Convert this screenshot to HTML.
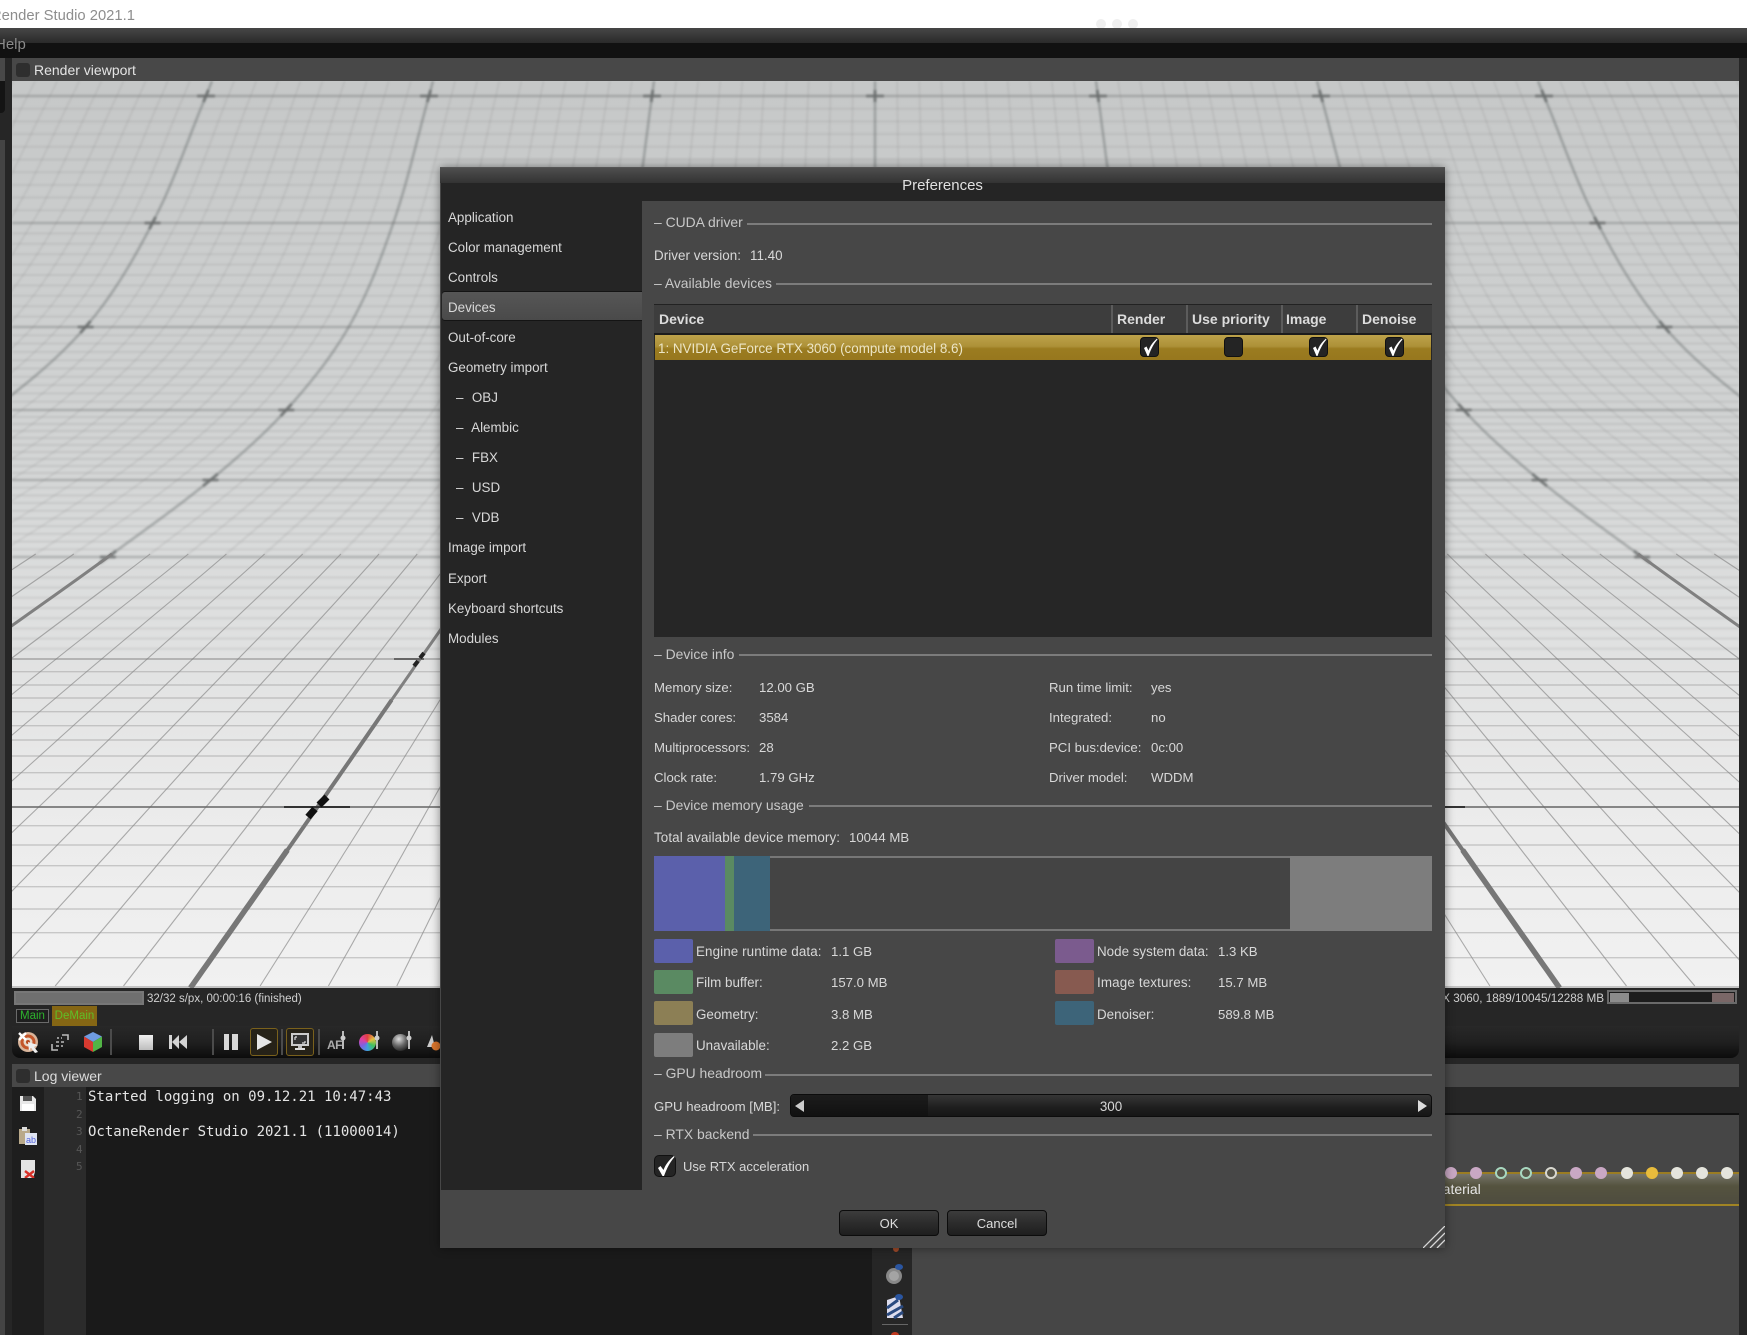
<!DOCTYPE html>
<html lang="en"><head><meta charset="utf-8"><title>OctaneRender Studio 2021.1</title>
<style>
html,body{margin:0;padding:0;background:#262626}
#p{position:relative;width:1747px;height:1335px;overflow:hidden;background:#262626;font-family:"Liberation Sans",sans-serif;font-size:13.4px;color:#d8d8d8}
#p div,#p svg,#p span{position:absolute}
#d .t,#d .li{margin-top:1px}
#d .s{font-size:13.9px;color:#c8c8c8;margin-top:0}
#d .h{font-size:14px;font-weight:bold;color:#dcdcdc;margin-top:0}
#d .v{font-size:13.2px}
.t{white-space:nowrap;line-height:16px;height:16px}
.ln{height:2px;background:#7c7c7c}
.sw{width:39px;height:24px;border-radius:2px}
.cb{width:19px;height:20px;background:#242424;border:1px solid #111;border-radius:4px;box-sizing:border-box}
.btn{height:26px;width:100px;box-sizing:border-box;border:1px solid #0c0c0c;border-radius:4px;background:linear-gradient(#3c3c3c,#2c2c2c 50%,#1e1e1e);text-align:center;line-height:25px;color:#ddd;font-size:13px}
.li{left:448px;white-space:nowrap;line-height:16px}
.sub{left:456px;word-spacing:.5px}
.pin{width:12px;height:12px;border-radius:50%;top:1167px}
.ring{width:12px;height:12px;border-radius:50%;top:1167px;box-sizing:border-box;background:#59574a}
.sep{width:2px;background:#4b4b4b;top:1029px;height:26px}
</style></head><body><div id="p">

<!-- window title -->
<div style="left:0;top:0;width:1747px;height:28px;background:#fff"></div>
<div class="t" style="left:-9px;top:8px;font-size:14.8px;color:#8d8d8d">Render Studio 2021.1</div>
<div style="left:1096px;top:19px;width:10px;height:10px;border-radius:50%;background:#efefef"></div>
<div style="left:1112px;top:19px;width:10px;height:10px;border-radius:50%;background:#efefef"></div>
<div style="left:1128px;top:19px;width:10px;height:10px;border-radius:50%;background:#efefef"></div>

<!-- menu -->
<div style="left:0;top:28px;width:1747px;height:15px;background:linear-gradient(#464646,#2a2a2a)"></div>
<div style="left:0;top:43px;width:1747px;height:15px;background:#111"></div>
<div class="t" style="left:-5px;top:37px;font-size:15px;color:#8a8a8a">Help</div>

<!-- left strip -->
<div style="left:0;top:58px;width:5px;height:23px;background:#484848"></div>
<div style="left:0;top:81px;width:5px;height:32px;background:#141414;border-radius:0 0 4px 0"></div>
<div style="left:0;top:140px;width:5px;height:1195px;background:#444"></div>

<!-- viewport header -->
<div style="left:12px;top:58px;width:1727px;height:23px;background:#484848"></div>
<div style="left:16px;top:63px;width:14px;height:14px;border-radius:3px;background:#2e2e2e"></div>
<div class="t" style="left:34px;top:62px;font-size:14px;color:#e4e4e4">Render viewport</div>

<!-- viewport -->
<svg id="vp" style="left:12px;top:81px" width="1727" height="907" viewBox="12 81 1727 907">
<defs>
<linearGradient id="bg" x1="0" y1="0" x2="0" y2="1"><stop offset="0" stop-color="#c6c8c8"/><stop offset=".4" stop-color="#d2d4d4"/><stop offset=".62" stop-color="#e0e1e1"/><stop offset=".8" stop-color="#ebebeb"/><stop offset="1" stop-color="#f1f1f1"/></linearGradient>
<filter id="b1" x="-5%" y="-5%" width="110%" height="110%"><feGaussianBlur stdDeviation="1.1"/></filter>
<filter id="b2" x="-5%" y="-5%" width="110%" height="110%"><feGaussianBlur stdDeviation=".35"/></filter>
</defs>
<rect x="12" y="81" width="1727" height="907" fill="url(#bg)"/>
<g id="gt" filter="url(#b1)" fill="none"></g>
<g id="gb" filter="url(#b2)" fill="none"></g>
<g fill="none" stroke="#151515" stroke-linecap="butt">
<path d="M284 807H350" stroke-width="2" stroke="#333"/>
<path d="M394 659H424" stroke-width="2" stroke="#666"/>
<path d="M1432 807H1465" stroke-width="2" stroke="#333"/>
<path d="M327 797L319 805M315 809L308 817" stroke-width="7" stroke="#111"/>
<path d="M424 653L420 658M418 661L414 666" stroke-width="4" stroke="#222"/>
</g>
</svg>

<!-- status -->
<div style="left:14px;top:991px;width:130px;height:14px;box-sizing:border-box;border:2px solid #777;background:#6f6f6f"></div>
<div class="t" style="left:147px;top:990px;font-size:11.5px;color:#d0d0d0;margin-top:1px">32/32 s/px, 00:00:16 (finished)</div>
<div class="t" style="right:143px;top:990px;font-size:11.7px;color:#d0d0d0;margin-top:1px">RTX 3060, 1889/10045/12288 MB</div>
<div style="left:1607px;top:990px;width:130px;height:14px;box-sizing:border-box;border:2px solid #6a6a6a;background:#1c1c1c"></div>
<div style="left:1610px;top:993px;width:19px;height:9px;background:#8c8c8c"></div>
<div style="left:1712px;top:993px;width:22px;height:9px;background:#7a6767"></div>
<div style="left:16px;top:1009px;width:33px;height:14px;box-sizing:border-box;border:1px solid #6a6a6a;background:#1e1e1e;color:#2db32d;font-size:11.5px;line-height:12px;text-align:center">Main</div>
<div style="left:52px;top:1006px;width:45px;height:20px;background:#856614;color:#5fbf28;font-size:11.5px;line-height:20px;text-align:center">DeMain</div>

<!-- toolbar -->
<div style="left:12px;top:1026px;width:1727px;height:32px;background:linear-gradient(#282828,#202020 50%,#0c0c0c);border-radius:0 0 8px 8px"></div>
<svg style="left:16px;top:1030px" width="24" height="24" viewBox="0 0 24 24"><circle cx="12" cy="12" r="10" fill="#d8b49a"/><circle cx="12" cy="12" r="7.5" fill="#c4562a"/><circle cx="12" cy="12" r="4.5" fill="#e8d8c8"/><circle cx="12" cy="12" r="2" fill="#b84a20"/><path d="M3 3L10 10M10 3L3 10" stroke="#fff" stroke-width="2.4"/><path d="M12 12L22 15L18 17L22 22L19 23L15 18L13 21Z" fill="#eee"/></svg>
<svg style="left:50px;top:1032px" width="20" height="20" viewBox="0 0 20 20" fill="none" stroke="#bbb" stroke-width="1.6"><path d="M12 3H18V8M8 18H2V12"/><path d="M7 6h2M12 6h-1M6 10h3M11 10h3M6 14h3M11 14h2"/></svg>
<svg style="left:83px;top:1031px" width="20" height="22" viewBox="0 0 20 22"><path d="M10 1L19 5.500L10 11L1 5.500Z" fill="#6f9be0"/><path d="M1 5.500L10 11V21L1 16Z" fill="#d83a30"/><path d="M19 5.500L10 11V21L19 16Z" fill="#52b446"/></svg>
<div class="sep" style="left:110px"></div>
<div style="left:139px;top:1035px;width:14px;height:15px;background:linear-gradient(#f0f0f0,#bdbdbd)"></div>
<svg style="left:168px;top:1034px" width="20" height="16" viewBox="0 0 20 16" fill="#d4d4d4"><rect x="1" y="1" width="3" height="14"/><path d="M11 1V15L4 8Z"/><path d="M19 1V15L11 8Z"/></svg>
<div class="sep" style="left:212px"></div>
<div style="left:224px;top:1034px;width:5px;height:16px;background:#d8d8d8"></div>
<div style="left:232px;top:1034px;width:6px;height:16px;background:#d8d8d8"></div>
<div style="left:250px;top:1028px;width:28px;height:28px;box-sizing:border-box;border:1.500px solid #7a611c;border-radius:3px;background:#262218"></div>
<svg style="left:256px;top:1033px" width="17" height="18" viewBox="0 0 17 18"><path d="M1 1L16 9L1 17Z" fill="#e6e6e6"/></svg>
<div class="sep" style="left:281px"></div>
<div style="left:286px;top:1028px;width:28px;height:28px;box-sizing:border-box;border:1.500px solid #7a611c;border-radius:3px;background:#262218"></div>
<svg style="left:290px;top:1032px" width="20" height="20" viewBox="0 0 20 20"><rect x="1" y="1" width="18" height="13" fill="#ccc"/><rect x="3" y="3" width="14" height="9" fill="#333"/><path d="M5 5V8M5 5L7 5M15 11H12M15 11V9" stroke="#ddd" stroke-width="1.200" fill="none"/><rect x="8" y="14" width="4" height="2" fill="#bbb"/><rect x="5" y="16" width="10" height="2" fill="#ddd"/></svg>
<div class="sep" style="left:318px"></div>
<div class="t" style="left:327px;top:1037px;font-size:12px;font-weight:bold;color:#aaa;letter-spacing:-.5px">AF</div>
<svg style="left:340px;top:1031px" width="6" height="18" viewBox="0 0 6 18"><path d="M3 0V18" stroke="#bbb" stroke-width="2"/><circle cx="3" cy="7" r="2.500" fill="#ccc"/></svg>
<div style="left:359px;top:1034px;width:17px;height:17px;border-radius:50%;background:conic-gradient(#e04040,#e0c040,#40c060,#40a0e0,#8060e0,#e040a0,#e04040)"></div>
<svg style="left:374px;top:1031px" width="6" height="18" viewBox="0 0 6 18"><path d="M3 0V18" stroke="#bbb" stroke-width="2"/><circle cx="3" cy="7" r="2.500" fill="#ccc"/></svg>
<div style="left:392px;top:1034px;width:17px;height:17px;border-radius:50%;background:radial-gradient(circle at 40% 30%,#ddd,#666 45%,#222 80%)"></div>
<svg style="left:406px;top:1031px" width="6" height="18" viewBox="0 0 6 18"><path d="M3 0V18" stroke="#bbb" stroke-width="2"/><circle cx="3" cy="7" r="2.500" fill="#ccc"/></svg>
<svg style="left:426px;top:1034px" width="16" height="17" viewBox="0 0 16 17"><path d="M6 1L1 13H9Z" fill="#ccc"/><circle cx="10" cy="12" r="4.500" fill="#d8742c"/></svg>

<!-- log viewer -->
<div style="left:12px;top:1064px;width:1727px;height:23px;background:#484848"></div>
<div style="left:16px;top:1069px;width:14px;height:14px;border-radius:3px;background:#2e2e2e"></div>
<div class="t" style="left:34px;top:1068px;font-size:14px;color:#dcdcdc">Log viewer</div>
<div style="left:12px;top:1087px;width:860px;height:248px;background:#1a1a1a"></div>
<div style="left:12px;top:1087px;width:32px;height:248px;background:#1e1e1e"></div>
<div style="left:44px;top:1087px;width:42px;height:248px;background:#2b2b2b"></div>
<div style="left:872px;top:1087px;width:40px;height:248px;background:#262626"></div>
<svg style="left:20px;top:1095px" width="16" height="16" viewBox="0 0 16 16"><path d="M0 1H13L16 4V16H0Z" fill="#e8e8e8"/><rect x="3" y="1" width="9" height="5" fill="#555"/><rect x="2" y="9" width="12" height="7" fill="#fff"/></svg>
<svg style="left:18px;top:1127px" width="20" height="19" viewBox="0 0 20 19"><rect x="1" y="2" width="11" height="15" fill="#b9a98a"/><rect x="4" y="0" width="5" height="4" fill="#ddd"/><rect x="7" y="6" width="12" height="12" fill="#dfe4f2"/><text x="8" y="16" font-size="9" fill="#5566dd" font-family="Liberation Sans">ab</text></svg>
<svg style="left:20px;top:1160px" width="17" height="18" viewBox="0 0 17 18"><path d="M1 0H15V12L13 18H1Z" fill="#e4e4e4"/><path d="M5 11L14 18M14 11L5 18" stroke="#d83028" stroke-width="2.400"/></svg>
<div style="left:76px;top:1087px;color:#565656;font-family:'DejaVu Sans Mono',monospace;font-size:11px;line-height:17.500px;padding-top:1px">1<br>2<br>3<br>4<br>5</div>
<div class="t" style="left:88px;top:1089px;font-family:'DejaVu Sans Mono',monospace;font-size:14px;color:#e4e4e4">Started logging on 09.12.21 10:47:43</div>
<div class="t" style="left:88px;top:1124px;font-family:'DejaVu Sans Mono',monospace;font-size:14px;color:#e4e4e4">OctaneRender Studio 2021.1 (11000014)</div>

<!-- node graph -->
<div style="left:912px;top:1087px;width:827px;height:26px;background:#262626"></div>
<div style="left:912px;top:1113px;width:827px;height:2px;background:#111"></div>
<div style="left:912px;top:1115px;width:827px;height:220px;background:#464646"></div>
<div style="left:1000px;top:1172px;width:739px;height:34px;background:linear-gradient(#757469,#55533f 40%,#4e4c3f);box-sizing:border-box;border-top:2px solid #9a7c22;border-bottom:2px solid #a08424"></div>
<div class="t" style="left:1431px;top:1181px;font-size:14px;color:#e8e8e8">Material</div>
<div class="pin" style="left:1445px;background:#c9a8c4"></div>
<div class="pin" style="left:1470px;background:#c9a8c4"></div>
<div class="ring" style="left:1495px;border:2px solid #a8d8c0"></div>
<div class="ring" style="left:1520px;border:2px solid #a8d8c0"></div>
<div class="ring" style="left:1545px;border:2px solid #d8d8d0"></div>
<div class="pin" style="left:1570px;background:#c9a8c4"></div>
<div class="pin" style="left:1595px;background:#c9a8c4"></div>
<div class="pin" style="left:1621px;background:#e4e4dc"></div>
<div class="pin" style="left:1646px;background:#e8bc3c"></div>
<div class="pin" style="left:1671px;background:#e4e4dc"></div>
<div class="pin" style="left:1696px;background:#e4e4dc"></div>
<div class="pin" style="left:1721px;background:#e4e4dc"></div>
<svg style="left:884px;top:1262px" width="22" height="62" viewBox="0 0 22 62"><circle cx="10" cy="14" r="8" fill="#888"/><circle cx="10" cy="14" r="5" fill="#c0c0c0" opacity=".5"/><ellipse cx="15" cy="5" rx="4" ry="3" fill="#2a55a0"/><path d="M3 38L15 34L19 56H3Z" fill="#dde"/><path d="M3 46L14 38M3 53L19 44M10 56L19 50" stroke="#2a4a80" stroke-width="3"/><ellipse cx="15" cy="35" rx="4" ry="3" fill="#2a55a0"/></svg>
<div style="left:882px;top:1324px;width:26px;height:1px;background:#666"></div>
<div style="left:891px;top:1332px;width:8px;height:6px;border-radius:50%;background:#c03a20"></div>
<div style="left:893px;top:1245px;width:6px;height:7px;border-radius:50%;background:#a04a2a"></div>

<!-- DIALOG -->
<div id="d" style="left:0;top:0;width:1747px;height:1335px">
<div style="left:440px;top:167px;width:1005px;height:1081px;background:#474747;box-shadow:0 0 9px rgba(0,0,0,.45)"></div>
<div style="left:440px;top:167px;width:1005px;height:16px;background:linear-gradient(#4e4e4e,#333);border-top:1px solid #555;box-sizing:border-box"></div>
<div style="left:441px;top:183px;width:1004px;height:18px;background:#252525"></div>
<div style="left:441px;top:183px;width:201px;height:1007px;background:#252525"></div>
<div class="t" style="left:840px;top:177px;width:205px;text-align:center;font-size:15px;color:#e0e0e0">Preferences</div>

<!-- side list -->
<div style="left:442px;top:292px;width:200px;height:28px;background:linear-gradient(#565656,#4a4a4a);border-radius:3px 0 0 3px;box-shadow:0 -1px 0 #141414,0 1px 0 #141414"></div>
<div class="li" style="top:209px">Application</div>
<div class="li" style="top:239px">Color management</div>
<div class="li" style="top:269px">Controls</div>
<div class="li" style="top:299px">Devices</div>
<div class="li" style="top:329px">Out-of-core</div>
<div class="li" style="top:359px">Geometry import</div>
<div class="li sub" style="top:389px">–&nbsp; OBJ</div>
<div class="li sub" style="top:419px">–&nbsp; Alembic</div>
<div class="li sub" style="top:449px">–&nbsp; FBX</div>
<div class="li sub" style="top:479px">–&nbsp; USD</div>
<div class="li sub" style="top:509px">–&nbsp; VDB</div>
<div class="li" style="top:539px">Image import</div>
<div class="li" style="top:570px">Export</div>
<div class="li" style="top:600px">Keyboard shortcuts</div>
<div class="li" style="top:630px">Modules</div>

<!-- sections -->
<div class="t s" style="left:654px;top:214px">– CUDA driver</div>
<div class="ln" style="left:747px;top:223px;width:685px"></div>
<div class="t" style="left:654px;top:247px;letter-spacing:.05px">Driver version:</div><div class="t" style="left:750px;top:247px">11.40</div>
<div class="t s" style="left:654px;top:275px">– Available devices</div>
<div class="ln" style="left:776px;top:283px;width:656px"></div>

<!-- table -->
<div style="left:654px;top:304px;width:778px;height:333px;background:#262626"></div>
<div style="left:654px;top:304px;width:778px;height:29px;background:#3d3d3d;box-shadow:inset 0 1px 0 #222"></div>
<div style="left:654px;top:333px;width:778px;height:2px;background:#1c1c1c"></div>
<div style="left:1111px;top:305px;width:2px;height:28px;background:#5c5c5c"></div>
<div style="left:1186px;top:305px;width:2px;height:28px;background:#5c5c5c"></div>
<div style="left:1281px;top:305px;width:2px;height:28px;background:#5c5c5c"></div>
<div style="left:1356px;top:305px;width:2px;height:28px;background:#5c5c5c"></div>
<div class="t h" style="left:659px;top:311px">Device</div>
<div class="t h" style="left:1117px;top:311px">Render</div>
<div class="t h" style="left:1192px;top:311px">Use priority</div>
<div class="t h" style="left:1286px;top:311px">Image</div>
<div class="t h" style="left:1362px;top:311px">Denoise</div>
<div style="left:655px;top:335px;width:776px;height:25px;background:linear-gradient(#bda24a,#ad9138 45%,#9b7c20 55%,#97771e)"></div>
<div class="t" style="left:658px;top:340px;color:#ece5c6">1: NVIDIA GeForce RTX 3060 (compute model 8.6)</div>
<div class="cb" style="left:1140px;top:337px"></div>
<div class="cb" style="left:1224px;top:337px"></div>
<div class="cb" style="left:1309px;top:337px"></div>
<div class="cb" style="left:1385px;top:337px"></div>
<svg style="left:1142px;top:337px" width="16" height="20" viewBox="0 0 16 20" fill="#fff"><path d="M2 11L4.500 9.500L6.500 13.500C8 9 11 5 15 1.500L15.500 2.500C11.500 7 9 12 6.500 19L5.500 19Z"/></svg>
<svg style="left:1311px;top:337px" width="16" height="20" viewBox="0 0 16 20" fill="#fff"><path d="M2 11L4.500 9.500L6.500 13.500C8 9 11 5 15 1.500L15.500 2.500C11.500 7 9 12 6.500 19L5.500 19Z"/></svg>
<svg style="left:1387px;top:337px" width="16" height="20" viewBox="0 0 16 20" fill="#fff"><path d="M2 11L4.500 9.500L6.500 13.500C8 9 11 5 15 1.500L15.500 2.500C11.500 7 9 12 6.500 19L5.500 19Z"/></svg>

<!-- device info -->
<div class="t s" style="left:654px;top:646px">– Device info</div>
<div class="ln" style="left:739px;top:654px;width:693px"></div>
<div class="t v" style="left:654px;top:679px">Memory size:</div><div class="t v" style="left:759px;top:679px">12.00 GB</div>
<div class="t v" style="left:654px;top:709px">Shader cores:</div><div class="t v" style="left:759px;top:709px">3584</div>
<div class="t v" style="left:654px;top:739px">Multiprocessors:</div><div class="t v" style="left:759px;top:739px">28</div>
<div class="t v" style="left:654px;top:769px">Clock rate:</div><div class="t v" style="left:759px;top:769px">1.79 GHz</div>
<div class="t v" style="left:1049px;top:679px">Run time limit:</div><div class="t v" style="left:1151px;top:679px">yes</div>
<div class="t v" style="left:1049px;top:709px">Integrated:</div><div class="t v" style="left:1151px;top:709px">no</div>
<div class="t v" style="left:1049px;top:739px">PCI bus:device:</div><div class="t v" style="left:1151px;top:739px">0c:00</div>
<div class="t v" style="left:1049px;top:769px">Driver model:</div><div class="t v" style="left:1151px;top:769px">WDDM</div>

<!-- memory -->
<div class="t s" style="left:654px;top:797px">– Device memory usage</div>
<div class="ln" style="left:809px;top:805px;width:623px"></div>
<div class="t" style="left:654px;top:829px;letter-spacing:.1px">Total available device memory:</div><div class="t v" style="left:849px;top:829px">10044 MB</div>
<div style="left:654px;top:856px;width:778px;height:75px;background:#444;box-sizing:border-box;border-top:2px solid #777;border-bottom:2px solid #777"></div>
<div style="left:654px;top:856px;width:71px;height:75px;background:#5b60ab"></div>
<div style="left:725px;top:856px;width:9px;height:75px;background:#5a8a62"></div>
<div style="left:734px;top:856px;width:36px;height:75px;background:#3d6479"></div>
<div style="left:1290px;top:856px;width:142px;height:75px;background:#7d7d7d"></div>

<div class="sw" style="left:654px;top:939px;background:#5b60ab"></div>
<div class="sw" style="left:654px;top:970px;background:#5a8a62"></div>
<div class="sw" style="left:654px;top:1001px;background:#8c7f55"></div>
<div class="sw" style="left:654px;top:1033px;background:#7d7d7d"></div>
<div class="sw" style="left:1055px;top:939px;background:#7b5b8e"></div>
<div class="sw" style="left:1055px;top:970px;background:#875a50"></div>
<div class="sw" style="left:1055px;top:1001px;background:#3d6479"></div>
<div class="t" style="left:696px;top:943px;letter-spacing:.1px">Engine runtime data:</div><div class="t v" style="left:831px;top:943px">1.1 GB</div>
<div class="t" style="left:696px;top:974px">Film buffer:</div><div class="t v" style="left:831px;top:974px">157.0 MB</div>
<div class="t" style="left:696px;top:1006px">Geometry:</div><div class="t v" style="left:831px;top:1006px">3.8 MB</div>
<div class="t" style="left:696px;top:1037px">Unavailable:</div><div class="t v" style="left:831px;top:1037px">2.2 GB</div>
<div class="t" style="left:1097px;top:943px">Node system data:</div><div class="t v" style="left:1218px;top:943px">1.3 KB</div>
<div class="t" style="left:1097px;top:974px;letter-spacing:.15px">Image textures:</div><div class="t v" style="left:1218px;top:974px">15.7 MB</div>
<div class="t" style="left:1097px;top:1006px">Denoiser:</div><div class="t v" style="left:1218px;top:1006px">589.8 MB</div>

<!-- headroom -->
<div class="t s" style="left:654px;top:1065px">– GPU headroom</div>
<div class="ln" style="left:765px;top:1074px;width:667px"></div>
<div class="t v" style="left:654px;top:1098px">GPU headroom [MB]:</div>
<div style="left:790px;top:1094px;width:642px;height:23px;box-sizing:border-box;border:1px solid #0c0c0c;border-radius:4px;background:linear-gradient(#363636,#1e1e1e 60%,#161616)"></div>
<div style="left:791px;top:1095px;width:137px;height:21px;border-radius:3px 0 0 3px;background:linear-gradient(#1c1c1c,#111)"></div>
<div class="t" style="left:1081px;top:1098px;width:60px;text-align:center">300</div>
<svg style="left:795px;top:1100px" width="9" height="12" viewBox="0 0 9 12"><path d="M9 0V12L0 6Z" fill="#ccc"/></svg>
<svg style="left:1418px;top:1100px" width="9" height="12" viewBox="0 0 9 12"><path d="M0 0V12L9 6Z" fill="#ddd"/></svg>
<div class="t s" style="left:654px;top:1126px">– RTX backend</div>
<div class="ln" style="left:753px;top:1134px;width:679px"></div>
<div class="cb" style="left:654px;top:1155px;width:22px;height:22px;border-radius:5px"></div>
<svg style="left:656px;top:1155px" width="19" height="22" viewBox="0 0 19 22" fill="#fff"><path d="M2 13L4.500 11L7.500 15C9.500 9.500 13 5 18 1L18.500 2C14 7 11 13 8 21L6.500 21Z"/></svg>
<div class="t" style="left:683px;top:1158px;font-size:13px">Use RTX acceleration</div>

<div class="btn" style="left:839px;top:1210px">OK</div>
<div class="btn" style="left:947px;top:1210px">Cancel</div>
<svg style="left:1423px;top:1226px" width="22" height="22" viewBox="0 0 22 22" stroke="#d8d8d8" stroke-width="1.300" fill="none"><path d="M0 22L22 0M7 22L22 7M14 22L22 14"/></svg>
</div>
</div>
<script>
(function(){
var ys=[96,223,327,410,480,557,659,807,988],fs=[1,1.08,1.18,1.32,1.49,1.72,2.04,2.5,3.07];
function f(y){
 if(y<=ys[0])return fs[0]-(ys[0]-y)*0.0006;
 for(var i=0;i<ys.length-1;i++){if(y<=ys[i+1]){
  var t=(y-ys[i])/(ys[i+1]-ys[i]);
  var m0=i>0?(fs[i+1]-fs[i-1])/(ys[i+1]-ys[i-1])*(ys[i+1]-ys[i]):(fs[1]-fs[0]);
  var m1=i<ys.length-2?(fs[i+2]-fs[i])/(ys[i+2]-ys[i])*(ys[i+1]-ys[i]):(fs[i+1]-fs[i]);
  var t2=t*t,t3=t2*t;
  return (2*t3-3*t2+1)*fs[i]+(t3-2*t2+t)*m0+(-2*t3+3*t2)*fs[i+1]+(t3-t2)*m1;
 }}
 return fs[8];
}
function X(k,y){return 875+k*223*f(y);}
function rad(k,a,b){var d="",first=true;for(var y=a;y<=b;y+=6){d+=(first?"M":"L")+X(k,y).toFixed(1)+" "+y;first=false;}return d;}
var hT=[],hB=[];
var zones=[[96,223,10],[223,327,10],[327,410,10],[410,480,10],[480,557,10],[557,659,10]];
zones.forEach(function(z){for(var i=0;i<z[2];i++){hT.push(z[0]+(z[1]-z[0])*i/z[2]);}});
[671.7,685,698,711.7,725.7,740,756,772.7,789,825.7,845,865.7,886.7,909,932.7,957.7].forEach(function(y){hB.push(y);});
function hp(a){return a.map(function(y){return "M12 "+y.toFixed(1)+"H1739";}).join("");}
function P(g,d,c,w,o){var p=document.createElementNS("http://www.w3.org/2000/svg","path");p.setAttribute("d",d);p.setAttribute("stroke",c);p.setAttribute("stroke-width",w);p.setAttribute("opacity",o);g.appendChild(p);}
var gt=document.getElementById("gt"),gb=document.getElementById("gb");
var rt="",rb="",Rt="",R1="",R2="",R3="",bl="";
for(var n=-60;n<=60;n++){var k=n/10;
 if(n%10===0){Rt+=rad(k,81,560);R1+=rad(k,554,704);R2+=rad(k,700,856);R3+=rad(k,850,988);}
 else{rt+=rad(k,81,560);rb+=rad(k,554,988);}}
function mark(k,y,h){var x=X(k,y);bl+="M"+(x-h).toFixed(1)+" "+y+"H"+(x+h).toFixed(1)+"M"+X(k,y-6).toFixed(1)+" "+(y-6)+"L"+X(k,y+6).toFixed(1)+" "+(y+6);}
[-3,-2,-1,0,1,2,3].forEach(function(k){mark(k,96,9);});
[-3,3].forEach(function(k){mark(k,223,8);mark(k,327,8);});
[-2,2].forEach(function(k){mark(k,410,8);mark(k,480,8);mark(k,557,8);});
P(gt,hp(hT),"#8d9090",1.4,.3);
P(gt,rt,"#8d9090",1.3,.3);
P(gt,"M12 96H1739M12 223H1739M12 327H1739M12 410H1739M12 480H1739M12 557H1739","#6f7272",2.2,.34);
P(gt,Rt,"#606464",2.5,.42);
P(gt,bl,"#4f5252",3,.55);
P(gb,hp(hB),"#a0a0a0",1.4,.5);
P(gb,rb,"#8a8a8a",1.1,.7);
P(gb,"M12 659H1739","#7d7d7d",1.6,.6);
P(gb,"M12 807H1739","#6c6c6c",1.8,.9);
P(gb,"M12 987H1739","#a0a0a0",1.5,.75);
P(gb,R1,"#808080",3,1);
P(gb,R2,"#777",4,1);
P(gb,R3,"#777",5.5,1);
})();
</script>
</body></html>
